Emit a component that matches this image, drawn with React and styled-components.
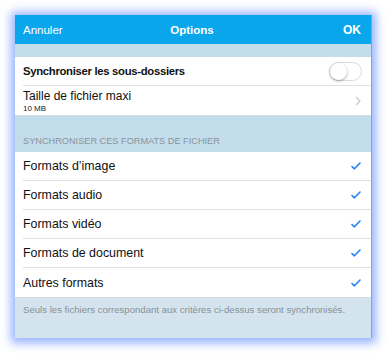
import React from "react";
import styled, { createGlobalStyle } from "styled-components";

const Global = createGlobalStyle`
  html, body { margin: 0; padding: 0; background: #ffffff; }
  body { font-family: "Liberation Sans", Arial, sans-serif; }
`;

const Page = styled.div`
  padding: 15px;
  width: 388px;
  height: 353px;
  box-sizing: border-box;
`;

const Panel = styled.div`
  width: 357px;
  height: 323px;
  display: flex;
  flex-direction: column;
  background: #d3e4ee;
  border-right: 1px solid #9aa0a6;
  box-sizing: border-box;
  box-shadow: 0 1px 9px 4px rgba(130, 165, 255, 0.85);
`;

const NavBar = styled.div`
  height: 29px;
  flex: none;
  background: #0aa6ec;
  display: grid;
  grid-template-columns: 1fr auto 1fr;
  align-items: center;
  padding: 0 10px 0 8px;
  color: #ffffff;
  font-size: 11.5px;
`;

const NavButton = styled.span`
  justify-self: ${(p) => (p.$right ? "end" : "start")};
  font-weight: ${(p) => (p.$bold ? 700 : 400)};
  font-size: ${(p) => (p.$bold ? "12px" : "11.5px")};
`;

const NavTitle = styled.span`
  font-weight: 700;
  font-size: 11.5px;
`;

const Band = styled.div`
  height: ${(p) => p.$h}px;
  flex: none;
  background: #c3ddec;
  display: flex;
  align-items: flex-end;
  padding: 0 8px 6px;
  box-sizing: border-box;
  color: #8b9399;
  font-size: 9.2px;
`;

const Group = styled.div`
  background: #ffffff;
  flex: none;
  border-bottom: 1px solid #d6dde2;
`;

const Row = styled.div`
  height: 29px;
  box-sizing: border-box;
  margin-left: 8px;
  padding-right: 10px;
  display: flex;
  align-items: center;
  justify-content: space-between;
  border-bottom: ${(p) => (p.$last ? "none" : "1px solid #dfe1e3")};
  color: #111111;
  font-size: ${(p) => (p.$bold ? "11.3px" : "12.4px")};
  letter-spacing: ${(p) => (p.$bold ? "-0.3px" : "0")};
  font-weight: ${(p) => (p.$bold ? 700 : 400)};
`;

const Stack = styled.div`
  display: flex;
  flex-direction: column;
  gap: 1px;
  font-size: 12px;
`;

const Sub = styled.span`
  font-size: 8px;
  color: #222;
`;

const Toggle = styled.div`
  width: 33px;
  height: 19px;
  border-radius: 10px;
  border: 1px solid #dcdcdc;
  box-sizing: border-box;
  position: relative;
  margin-right: -1px;
  &::after {
    content: "";
    position: absolute;
    left: 0;
    top: 0;
    width: 17px;
    height: 17px;
    border-radius: 50%;
    background: #fff;
    box-shadow: 0 1px 3px rgba(0, 0, 0, 0.35);
  }
`;

const Footer = styled.div`
  flex: 1;
  padding: 6px 8px 0;
  color: #8a9096;
  font-size: 9.6px;
  white-space: nowrap;
`;

const Chevron = () => (
  <svg width="6" height="10" viewBox="0 0 6 10">
    <path d="M1 1l4 4L1 9" fill="none" stroke="#c4c7cc" strokeWidth="1.2" />
  </svg>
);

const Check = () => (
  <svg width="10" height="8" viewBox="0 0 10 8">
    <path d="M1 4.5l2.4 2.3L9 1" fill="none" stroke="#1f82f5" strokeWidth="1.6" strokeLinecap="round" strokeLinejoin="round" />
  </svg>
);

const formats = [
  "Formats d’image",
  "Formats audio",
  "Formats vidéo",
  "Formats de document",
  "Autres formats",
];

export default function App() {
  return (
    <>
      <Global />
      <Page>
        <Panel>
          <NavBar>
            <NavButton>Annuler</NavButton>
            <NavTitle>Options</NavTitle>
            <NavButton $right $bold>OK</NavButton>
          </NavBar>
          <Band $h={13} />
          <Group>
            <Row $bold>
              Synchroniser les sous-dossiers
              <Toggle />
            </Row>
            <Row $last>
              <Stack>
                <span>Taille de fichier maxi</span>
                <Sub>10 MB</Sub>
              </Stack>
              <Chevron />
            </Row>
          </Group>
          <Band $h={36}>SYNCHRONISER CES FORMATS DE FICHIER</Band>
          <Group>
            {formats.map((f, i) => (
              <Row key={f} $last={i === formats.length - 1}>
                {f}
                <Check />
              </Row>
            ))}
          </Group>
          <Footer>Seuls les fichiers correspondant aux critères ci-dessus seront synchronisés.</Footer>
        </Panel>
      </Page>
    </>
  );
}
